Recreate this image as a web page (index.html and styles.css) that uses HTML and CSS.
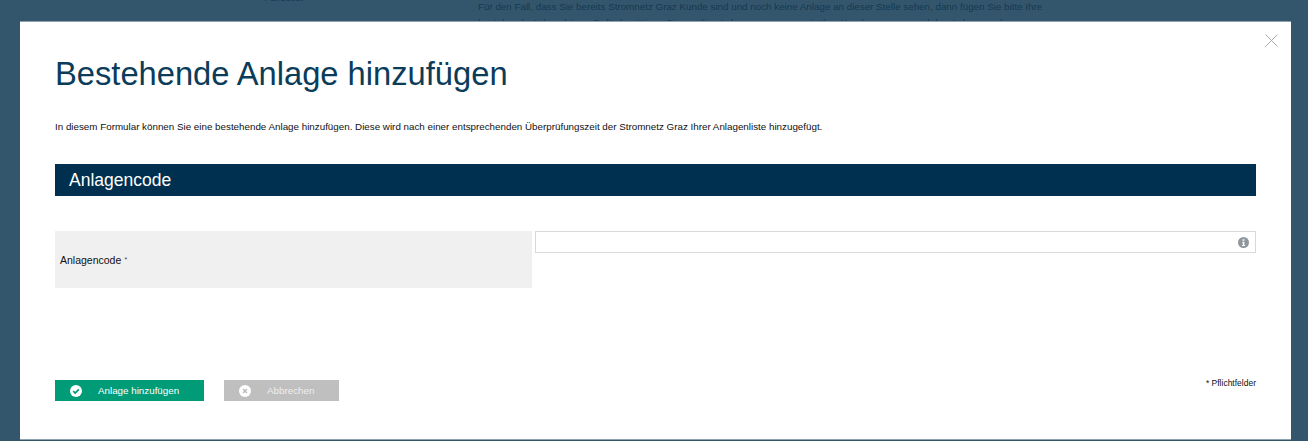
FILE: index.html
```html
<!DOCTYPE html>
<html lang="de">
<head>
    <meta charset="UTF-8">
    <title>Bestehende Anlage hinzufügen</title>
    <link rel="stylesheet" href="styles.css">
</head>
<body>
    <div class="page">
        <div class="page-label">Adresse:</div>
        <div class="page-text">
            Für den Fall, dass Sie bereits Stromnetz Graz Kunde sind und noch keine Anlage an dieser Stelle sehen, dann fügen Sie bitte Ihre
            bestehende Anlage hinzu. Dafür benötigen Sie nur Ihre Anlagennummer sowie Ihre Kundennummer und den Anlagencode.
        </div>
    </div>

    <div class="overlay"></div>

    <div class="modal">
        <svg class="modal-close" viewBox="0 0 13 13" width="13" height="13">
            <path d="M.5.5l12 12M12.5.5l-12 12" stroke="#a9a9a9" fill="none"/>
        </svg>

        <h1 class="modal-title">Bestehende Anlage hinzufügen</h1>
        <p class="modal-intro">In diesem Formular können Sie eine bestehende Anlage hinzufügen. Diese wird nach einer entsprechenden Überprüfungszeit der Stromnetz Graz Ihrer Anlagenliste hinzugefügt.</p>

        <h2 class="section-head">Anlagencode</h2>

        <div class="form-row">
            <label class="form-label">Anlagencode <span class="form-star">*</span></label>
            <div class="form-field">
                <input class="form-input" type="text">
                <svg class="form-info" viewBox="0 0 12 12" width="11" height="11">
                    <circle cx="6" cy="6" r="6" fill="#8f969c"/>
                    <path d="M5 2.400h2v1.700H5zM4.600 5.100h2.400v3.600h.7v1H4.500v-1h.7V6.100h-.6z" fill="#fff"/>
                </svg>
            </div>
        </div>

        <div class="modal-foot">
            <div class="btn-group">
                <a class="btn btn-ok">
                    <svg viewBox="0 0 12 12" width="12" height="12">
                        <circle cx="6" cy="6" r="6" fill="#fff"/>
                        <path d="M3.200 6.100l2 2 3.600-3.800" stroke="#009b77" stroke-width="1.700" fill="none"/>
                    </svg>
                    <span>Anlage hinzufügen</span>
                </a>
                <a class="btn btn-cancel">
                    <svg viewBox="0 0 12 12" width="12" height="12">
                        <circle cx="6" cy="6" r="6" fill="#fff"/>
                        <path d="M4 4l4 4M8 4l-4 4" stroke="#bfbfbf" stroke-width="1.600" fill="none"/>
                    </svg>
                    <span>Abbrechen</span>
                </a>
            </div>
            <div class="modal-hint">* Pflichtfelder</div>
        </div>
    </div>
</body>
</html>
```

FILE: styles.css
```css
html, body { margin: 0; padding: 0; height: 441px; overflow: hidden; }
body { position: relative; background: #fff; font-family: "Liberation Sans", Arial, sans-serif; color: #000; }

/* page behind the dialog */
.page { display: grid; grid-template-columns: 478px 570px; height: 441px; overflow: hidden; color: #707078; font-size: 9.800px; line-height: 16px; }
.page-label { margin: -10px 0 0 265px; }
.page-text { margin-top: -1px; }

.overlay { position: absolute; left: 0; top: 0; right: 0; bottom: 0; background: rgba(0,44,71,.8); }

/* dialog */
.modal { position: absolute; left: 20px; top: 22px; width: 1271px; height: 417px; box-sizing: border-box; padding: 0 35px; background: #fff; box-shadow: 0 -1px 0 #8ea3b1, 0 1px 0 #8ea3b1; }
.modal-close { position: absolute; right: 13px; top: 12px; }
.modal-title { margin: 0; padding-top: 32px; font-size: 32.700px; line-height: 40px; font-weight: normal; color: #0b3c5a; }
.modal-intro { margin: 27px 0 0; font-size: 9.800px; line-height: 12px; color: #111; }

.section-head { margin: 31px 0 0; padding: 0 14px; height: 32px; line-height: 32px; background: #00304f; color: #fff; font-size: 17.500px; font-weight: normal; }

.form-row { display: flex; gap: 3px; margin-top: 35px; }
.form-label { display: flex; align-items: center; width: 472px; height: 57px; padding-left: 5px; background: #f0f0f0; font-size: 10.500px; color: #111; }
.form-star { margin-left: 3px; font-size: 8px; color: #555; }
.form-field { position: relative; flex: 1; }
.form-input { display: block; width: 100%; height: 22px; box-sizing: border-box; padding: 0 30px 0 6px; border: 1px solid #d9d9d9; background: #fff; outline: 0; }
.form-info { position: absolute; right: 7px; top: 6px; }

.modal-foot { display: flex; justify-content: space-between; align-items: flex-start; margin-top: 92px; }
.btn-group { display: flex; gap: 20px; }
.btn { display: flex; align-items: center; height: 21px; font-size: 9.800px; color: #fff; }
.btn svg { margin-left: 15px; }
.btn-ok { width: 149px; background: #009b77; }
.btn-ok span { margin-left: 16px; }
.btn-cancel { width: 115px; background: #bfbfbf; }
.btn-cancel span { margin-left: 16px; color: #eee; }
.modal-hint { margin-top: -2px; font-size: 8.500px; line-height: 11px; color: #111; }
```
